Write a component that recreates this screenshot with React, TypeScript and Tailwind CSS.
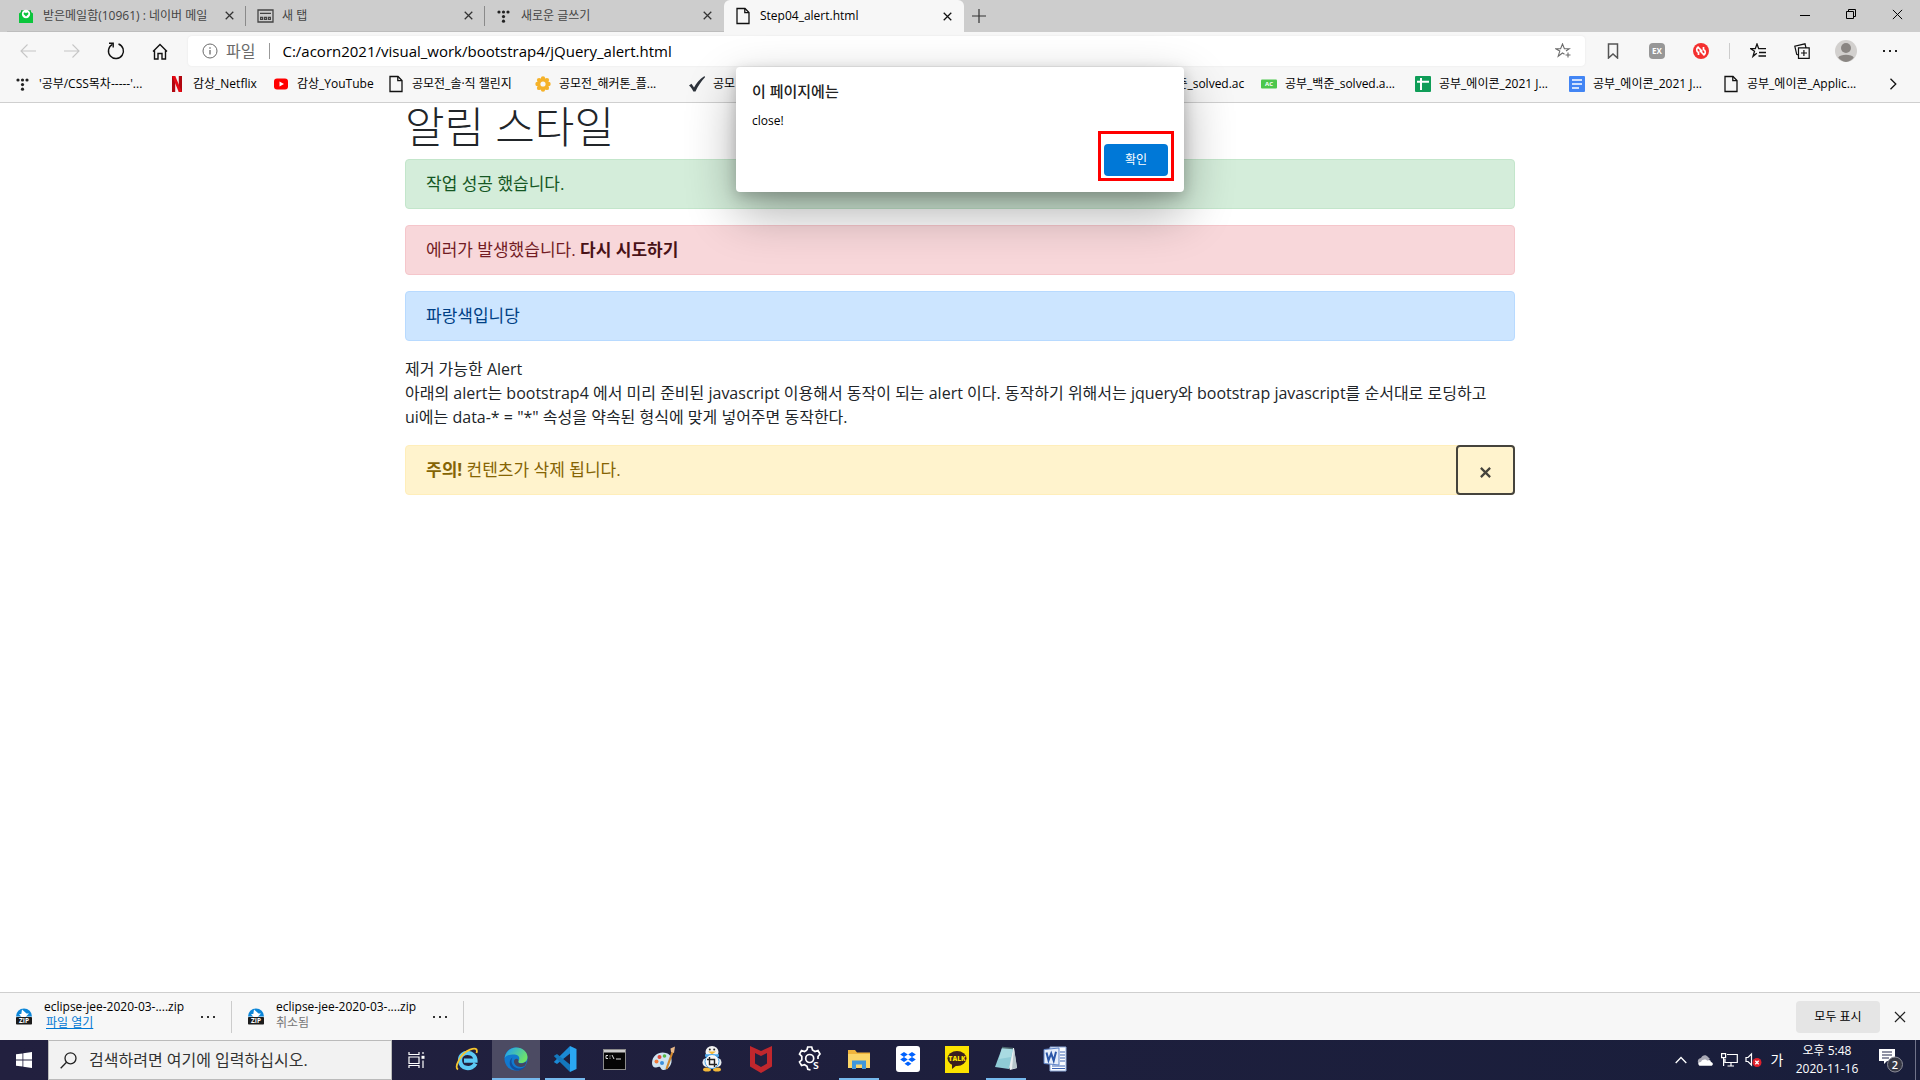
import React from "react";

/* ---------- small icons ---------- */

function CloseIcon({ size = 10, color = "#222", stroke = 1.2 }: { size?: number; color?: string; stroke?: number }) {
  return (
    <svg width={size} height={size} viewBox="0 0 10 10" fill="none" stroke={color} strokeWidth={stroke}>
      <path d="M.8.8l8.4 8.4M9.2.8L.8 9.2" />
    </svg>
  );
}

function PageIcon() {
  return (
    <svg width="16" height="18" viewBox="0 0 16 18" fill="none" stroke="#111" strokeWidth="1.3">
      <path d="M2 1.5h8l4 4v11H2z" />
      <path d="M9.8 1.5v4.2H14" />
    </svg>
  );
}

function TistoryIcon() {
  return (
    <svg width="16" height="16" viewBox="0 0 16 16" fill="#222">
      <circle cx="3" cy="4" r="1.6" />
      <circle cx="7.5" cy="4" r="1.6" />
      <circle cx="12" cy="4" r="1.6" />
      <circle cx="7.5" cy="8.6" r="1.6" />
      <circle cx="7.5" cy="13.2" r="1.6" />
    </svg>
  );
}

function MailIcon() {
  return (
    <svg width="16" height="16" viewBox="0 0 16 16">
      <path d="M1 5.500l2-1.500V2.500h10V4l2 1.500V15H1z" fill="#0bc63c" />
      <path d="M3 2.500h10v7L8 12 3 9.500z" fill="#09b637" />
      <path d="M1 5.500L8 11l7-5.500V15H1z" fill="#0bc63c" />
      <circle cx="8" cy="6" r="4.200" fill="#fff" />
      <path d="M8 8.600L5.700 6.200c-.6-1.600 1.500-2.300 2.300-.9.800-1.400 2.900-.7 2.300.9z" fill="#0bc63c" />
    </svg>
  );
}

function NewTabIcon() {
  return (
    <svg width="17" height="14" viewBox="0 0 17 14" fill="none" stroke="#444" strokeWidth="1.300">
      <path d="M1 1h15v12H1zM3 4.300h11" />
      <path d="M3.600 8.300h2v2h-2zM7.500 8.300h2v2h-2zM11.400 8.300h2v2h-2z" strokeWidth="1.200" />
    </svg>
  );
}

function NetflixIcon() {
  return (
    <svg width="16" height="16" viewBox="0 0 16 16">
      <path d="M3 0h3.200v16H3zM9.800 0H13v16H9.800z" fill="#b1060f" />
      <path d="M3 0h3.200L13 16H9.800z" fill="#e50914" />
    </svg>
  );
}

function YoutubeIcon() {
  return (
    <svg width="16" height="16" viewBox="0 0 16 16">
      <rect x="1" y="2.500" width="14" height="11" rx="3" fill="#f00" />
      <path d="M6.500 5.500v5L11 8z" fill="#fff" />
    </svg>
  );
}

function FlowerIcon() {
  return (
    <svg width="16" height="16" viewBox="0 0 16 16">
      <g fill="#f5b22a">
        <circle cx="8" cy="8" r="5.500" />
        <circle cx="8" cy="2.500" r="2.200" />
        <circle cx="8" cy="13.500" r="2.200" />
        <circle cx="2.500" cy="8" r="2.200" />
        <circle cx="13.500" cy="8" r="2.200" />
        <circle cx="4.100" cy="4.100" r="2.200" />
        <circle cx="11.900" cy="4.100" r="2.200" />
        <circle cx="4.100" cy="11.900" r="2.200" />
        <circle cx="11.900" cy="11.900" r="2.200" />
      </g>
      <circle cx="8" cy="8" r="2.600" fill="#f7f7f7" />
    </svg>
  );
}

function CheckIcon() {
  return (
    <svg width="16" height="16" viewBox="0 0 16 16">
      <path d="M0 9.500l2.500-1.800L5 11.500C7.500 7 10.500 3 15.500 0l.5 1.200C12 5.500 9 10 6.500 15.500H4.300C3.300 13 2 11 0 9.500z" fill="#2d333b" />
    </svg>
  );
}

function AcIcon() {
  return (
    <svg width="16" height="16" viewBox="0 0 16 16">
      <rect y="3.500" width="16" height="9" rx="1" fill="#4cc74c" />
      <text x="8" y="10.200" textAnchor="middle" fontSize="6" fontWeight="700" fill="#fff" fontFamily="Open Sans">AC</text>
    </svg>
  );
}

function SheetIcon() {
  return (
    <svg width="16" height="16" viewBox="0 0 16 16">
      <rect width="16" height="16" rx="1" fill="#0f9d58" />
      <path d="M6 2v12M2 5.700h12" stroke="#fff" strokeWidth="2" />
    </svg>
  );
}

function DocIcon() {
  return (
    <svg width="16" height="16" viewBox="0 0 16 16">
      <rect width="16" height="16" rx="1" fill="#4285f4" />
      <path d="M3 4h10M3 8h10M3 12h7" stroke="#fff" strokeWidth="1.700" />
    </svg>
  );
}

/* ---------- tab strip ---------- */

function Tab({ icon, title, active = false, divider = false }: { icon: React.ReactNode; title: string; active?: boolean; divider?: boolean }) {
  return (
    <div
      className={
        active
          ? "flex h-full w-60 items-center rounded-t-md bg-[#f7f7f7] pr-3 pl-2.5 text-black"
          : "relative flex h-full w-[239px] items-center border-b border-[#bdbdbd] pr-3 pl-2.5 text-[#444]"
      }
    >
      {divider && <span className="absolute top-1.5 right-0 h-5 w-px bg-[#8a8a8a]" />}
      <span className="flex w-[18px] shrink-0 justify-center">{icon}</span>
      <button className="ml-2 min-w-0 flex-1 overflow-hidden text-left text-xs whitespace-nowrap">{title}</button>
      <button aria-label="탭 닫기" className="shrink-0">
        <CloseIcon size={9} color={active ? "#111" : "#333"} stroke={1.4} />
      </button>
    </div>
  );
}

function TabStrip() {
  return (
    <div className="flex h-8 items-center justify-between bg-[#cdcdcd]">
      <div className="flex h-full items-center pl-[7px]">
        <Tab icon={<MailIcon />} title="받은메일함(10961) : 네이버 메일" divider />
        <Tab icon={<NewTabIcon />} title="새 탭" divider />
        <Tab icon={<TistoryIcon />} title="새로운 글쓰기" />
        <Tab icon={<PageIcon />} title="Step04_alert.html" active />
        <button aria-label="새 탭" className="ml-2">
          <svg width="14" height="14" viewBox="0 0 14 14" stroke="#333" strokeWidth="1.200">
            <path d="M7 0v14M0 7h14" />
          </svg>
        </button>
      </div>
      <div className="flex h-full items-center">
        <button aria-label="최소화" className="flex h-full w-[46px] items-center justify-center">
          <svg width="10" height="10" viewBox="0 0 10 10" stroke="#000"><path d="M0 4.500h10" /></svg>
        </button>
        <button aria-label="이전 크기로" className="flex h-full w-[46px] items-center justify-center pb-1">
          <svg width="10" height="10" viewBox="0 0 10 10" fill="none" stroke="#000"><path d="M.5 2.500h7v7h-7zM2.500 2.500v-2h7v7h-2" /></svg>
        </button>
        <button aria-label="닫기" className="flex h-full w-[46px] items-center justify-center pb-1">
          <CloseIcon size={11} color="#000" stroke={0.9} />
        </button>
      </div>
    </div>
  );
}

/* ---------- toolbar ---------- */

function ToolButton({ label, children }: { label: string; children: React.ReactNode }) {
  return (
    <button aria-label={label} className="flex h-8 w-11 shrink-0 items-center justify-center">
      {children}
    </button>
  );
}

function Toolbar() {
  return (
    <div className="flex h-[38px] items-center bg-[#f7f7f7] pl-1.5">
      <ToolButton label="뒤로">
        <svg width="16" height="14" viewBox="0 0 16 14" fill="none" stroke="#c6c6c6" strokeWidth="1.100"><path d="M16 7H1M7.500.5L1 7l6.500 6.500" /></svg>
      </ToolButton>
      <ToolButton label="앞으로">
        <svg width="16" height="14" viewBox="0 0 16 14" fill="none" stroke="#c6c6c6" strokeWidth="1.100"><path d="M0 7h15M8.500.5L15 7l-6.500 6.500" /></svg>
      </ToolButton>
      <ToolButton label="새로 고침">
        <svg width="18" height="18" viewBox="0 0 18 18" fill="none" stroke="#111" strokeWidth="1.400">
          <path d="M11.500 2A7.500 7.500 0 1 1 5.500 2.400" />
          <path d="M2 1.200h4.200v4.200" />
        </svg>
      </ToolButton>
      <ToolButton label="홈">
        <svg width="16" height="17" viewBox="0 0 16 17" fill="none" stroke="#111" strokeWidth="1.400">
          <path d="M1 8.500L8 1.500l7 7M2.500 7.500V16H6v-5.500h4V16h3.500V7.500" />
        </svg>
      </ToolButton>
      <div className="ml-1.5 flex h-[30px] flex-1 items-center rounded bg-white px-3.5 shadow-[0_0_2px_#e4e4e4]">
        <svg className="shrink-0" width="16" height="16" viewBox="0 0 16 16" fill="none" stroke="#6b6b6b">
          <circle cx="8" cy="8" r="7" />
          <path d="M8 7v4.500M8 4.300v1.400" strokeWidth="1.300" />
        </svg>
        <span className="ml-2 shrink-0 text-base text-[#6b6b6b]">파일</span>
        <span className="ml-3.5 h-4 w-px shrink-0 bg-[#999]" />
        <input
          aria-label="주소"
          readOnly
          value="C:/acorn2021/visual_work/bootstrap4/jQuery_alert.html"
          className="ml-3 min-w-0 flex-1 bg-transparent text-[15px] text-black outline-none"
        />
        <button aria-label="즐겨찾기에 추가" className="shrink-0">
          <svg width="16" height="16" viewBox="0 0 16 16" fill="none" stroke="#6b6b6b" strokeWidth="1.100">
            <path d="M9.500 11.200L7.500 10l-4.300 3.200 1.600-5.100L.8 5.800h4.800L7.500 1l1.900 4.800h4.800L11 8M13 9.500v5M10.500 12h5" />
          </svg>
        </button>
      </div>
      <div className="ml-1.5 flex items-center">
        <ToolButton label="책갈피">
          <svg width="12" height="16" viewBox="0 0 12 16" fill="none" stroke="#555" strokeWidth="1.500"><path d="M1.500 1h9v14L6 11l-4.500 4z" /></svg>
        </ToolButton>
        <ToolButton label="확장 EX">
          <span className="flex size-4 items-center justify-center rounded-sm bg-[#979797] text-[8px] font-bold text-white">EX</span>
        </ToolButton>
        <ToolButton label="확장 차단기">
          <svg width="16" height="16" viewBox="0 0 16 16" fill="none">
            <circle cx="8" cy="8" r="8" fill="#f4302f" />
            <path d="M5.500 12V9.500C3.200 8.500 3.200 5.500 5 4.200l4.300 4.300M10.500 4v2.500c2.300 1 2.300 4 .5 5.300L6.700 7.500" stroke="#fff" strokeWidth="1.700" />
          </svg>
        </ToolButton>
        <span className="mx-1.5 h-4 w-px bg-[#ccc]" />
        <ToolButton label="즐겨찾기">
          <svg width="17" height="16" viewBox="0 0 17 16" fill="none" stroke="#111" strokeWidth="1.300">
            <path d="M6.800 10.200L3 13.300l1.500-5L.8 5.700h4.500L7 1l1.700 4.700H16M9 9.500h7M8.500 13h7.500" />
          </svg>
        </ToolButton>
        <ToolButton label="컬렉션">
          <svg width="16" height="16" viewBox="0 0 16 16" fill="none" stroke="#111" strokeWidth="1.200">
            <path d="M4.500 4.800h10.700v10.500H4.500zM9.900 7v6M7 10h6M4.300 12L2.700 11.400.8 3.200 11 .8l.9 3.700" />
          </svg>
        </ToolButton>
        <ToolButton label="프로필">
          <svg width="22" height="22" viewBox="0 0 22 22">
            <circle cx="11" cy="11" r="11" fill="#d2d0ce" />
            <circle cx="11" cy="8" r="5" fill="#8a8683" />
            <path d="M3.200 17.500c2-3.700 13.600-3.700 15.600 0A11 11 0 0 1 11 22a11 11 0 0 1-7.800-4.500z" fill="#8a8683" />
          </svg>
        </ToolButton>
        <ToolButton label="설정 및 기타">
          <svg width="16" height="4" viewBox="0 0 16 4" fill="#222"><path d="M1 1h2v2H1zM7 1h2v2H7zM13 1h2v2h-2z" /></svg>
        </ToolButton>
        <span className="w-2" />
      </div>
    </div>
  );
}

/* ---------- bookmarks ---------- */

type Bookmark = { icon: React.ReactNode; label: string; w: string };

const firstBookmarks: Bookmark[] = [
  { icon: <TistoryIcon />, label: "'공부/CSS목차-----'...", w: "w-[154px]" },
  { icon: <NetflixIcon />, label: "감상_Netflix", w: "w-[104px]" },
  { icon: <YoutubeIcon />, label: "감상_YouTube", w: "w-[115px]" },
  { icon: <PageIcon />, label: "공모전_솔·직 챌린지", w: "w-[147px]" },
  { icon: <FlowerIcon />, label: "공모전_해커톤_플...", w: "w-[154px]" },
  { icon: <CheckIcon />, label: "공모", w: "w-[48px]" },
];

const lastBookmarks: Bookmark[] = [
  { icon: <AcIcon />, label: "공부_백준_solved.ac", w: "w-[147px]" },
  { icon: <AcIcon />, label: "공부_백준_solved.a...", w: "w-[154px]" },
  { icon: <SheetIcon />, label: "공부_에이콘_2021 J...", w: "w-[154px]" },
  { icon: <DocIcon />, label: "공부_에이콘_2021 J...", w: "w-[154px]" },
  { icon: <PageIcon />, label: "공부_에이콘_Applic...", w: "w-[163px]" },
];

function BookmarkList({ items }: { items: Bookmark[] }) {
  return (
    <ul className="flex items-center">
      {items.map((b, i) => (
        <li key={i} className={b.w}>
          <a href="#" className="flex items-center gap-2 text-xs whitespace-nowrap text-black">
            <span className="shrink-0">{b.icon}</span>
            {b.label}
          </a>
        </li>
      ))}
    </ul>
  );
}

function BookmarkBar() {
  return (
    <nav className="flex h-[33px] items-center border-b border-[#cfcfcf] bg-[#f7f7f7] pr-5 pb-1 pl-[15px]">
      <BookmarkList items={firstBookmarks} />
      <div className="ml-auto">
        <BookmarkList items={lastBookmarks} />
      </div>
      <button aria-label="더 보기">
        <svg width="14" height="12" viewBox="0 0 14 12" fill="none" stroke="#111" strokeWidth="1.300"><path d="M4.500.7L9.800 6l-5.300 5.300" /></svg>
      </button>
    </nav>
  );
}

/* ---------- page ---------- */

function Alert({ tone, children }: { tone: string; children: React.ReactNode }) {
  return <div role="alert" className={"mb-4 rounded border px-5 py-3 text-[17px] leading-6 " + tone}>{children}</div>;
}

function Page() {
  return (
    <main className="flex-1 bg-white">
      <div className="mx-auto w-full max-w-[1110px] text-[17px] leading-6 text-[#212529]">
        <h1 className="mb-2 text-[43px] leading-[48px] font-light">알림 스타일</h1>
        <Alert tone="border-[#c3e6cb] bg-[#d4edda] text-[#155724]">작업 성공 했습니다.</Alert>
        <Alert tone="border-[#f5c6cb] bg-[#f8d7da] text-[#721c24]">
          에러가 발생했습니다. <a href="#" className="font-bold text-[#491217]">다시 시도하기</a>
        </Alert>
        <Alert tone="border-[#b8daff] bg-[#cce5ff] text-[#004085]">파랑색입니당</Alert>
        <p className="mb-4 text-base leading-6">
          제거 가능한 Alert
          <br />
          아래의 alert는 bootstrap4 에서 미리 준비된 javascript 이용해서 동작이 되는 alert 이다. 동작하기 위해서는 jquery와 bootstrap javascript를 순서대로 로딩하고
          <br />
          ui에는 data-* = "*" 속성을 약속된 형식에 맞게 넣어주면 동작한다.
        </p>
        <div role="alert" className="flex items-stretch justify-between rounded border border-[#ffeeba] bg-[#fff3cd] pl-5 text-[#856404]">
          <span className="py-3">
            <strong>주의!</strong> 컨텐츠가 삭제 됩니다.
          </span>
          <button aria-label="Close" className="-m-px flex w-[59px] items-center justify-center rounded border-2 border-[#45433c] pt-1">
            <CloseIcon size={11} color="#45433c" stroke={2} />
          </button>
        </div>
      </div>
    </main>
  );
}

function Dialog() {
  return (
    <div
      role="dialog"
      aria-labelledby="dialog-title"
      className="absolute top-[67px] left-1/2 flex h-[125px] w-[448px] -translate-x-1/2 flex-col rounded bg-white pt-3 pr-2.5 pb-[11px] pl-4 shadow-[0_20px_50px_rgba(0,0,0,0.32),0_4px_14px_rgba(0,0,0,0.2)]"
    >
      <h2 id="dialog-title" className="text-[15px] leading-6 font-medium text-[#222]">이 페이지에는</h2>
      <p className="mt-2 text-xs leading-5 text-black">close!</p>
      <div className="mt-auto self-end border-[3px] border-[#f00] px-[3px] pt-2.5 pb-0.5">
        <button className="flex h-8 w-16 items-center justify-center rounded-sm bg-[#0078d7] text-xs text-white">확인</button>
      </div>
    </div>
  );
}

/* ---------- downloads ---------- */

function ZipIcon() {
  return (
    <svg width="16" height="17" viewBox="0 0 16 17" className="shrink-0">
      <path d="M0 8.500a8 8 0 0 1 16 0z" fill="#0d86d8" />
      <path d="M6 1.500l4.500 4H13L9.500 9H5.500L3 6h2.300z" fill="#fff" />
      <rect y="9" width="16" height="7.500" rx=".8" fill="#1c1c1c" />
      <text x="8" y="15.200" textAnchor="middle" fontSize="6.500" fontWeight="700" fill="#fff" fontFamily="Open Sans">ZIP</text>
    </svg>
  );
}

function Download({ children }: { children: React.ReactNode }) {
  return (
    <div className="flex h-8 w-[232px] items-center justify-between border-r border-[#ccc] pr-3.5 pl-4">
      <div className="flex items-center gap-3">
        <ZipIcon />
        <div className="flex flex-col items-start pb-1 text-xs leading-4 text-black">
          <span>eclipse-jee-2020-03-....zip</span>
          {children}
        </div>
      </div>
      <button aria-label="다운로드 옵션">
        <svg width="18" height="4" viewBox="0 0 18 4" fill="#333"><path d="M2 1h2v2H2zM8 1h2v2H8zM14 1h2v2h-2z" /></svg>
      </button>
    </div>
  );
}

function DownloadBar() {
  return (
    <div className="flex h-12 items-center justify-between border-t border-[#cfcfcf] bg-[#f7f7f7] pr-3.5">
      <div className="flex">
        <Download><a href="#" className="ml-0.5 text-[#0078d4] underline">파일 열기</a></Download>
        <Download><span className="text-[#767676]">취소됨</span></Download>
      </div>
      <div className="flex items-center gap-3.5">
        <button className="h-8 w-[84px] rounded-sm bg-[#e5e5e5] text-xs text-black">모두 표시</button>
        <button aria-label="닫기"><CloseIcon size={12} color="#222" stroke={1} /></button>
      </div>
    </div>
  );
}

/* ---------- taskbar ---------- */

const apps = [
  {
    name: "Internet Explorer",
    icon: (
      <svg width="24" height="24" viewBox="0 0 24 24" fill="none">
        <path d="M20.500 16.500C17 23.500 5 22.500 5 13 5 3.500 20.500 3.500 20.500 13.700H9" stroke="#5ccaf5" strokeWidth="4.200" />
        <path d="M3 22.500C-1 20 5.500 6.500 15 2.700c5-2 8-1.200 6.500 3.300" stroke="#f6c52e" strokeWidth="1.800" />
      </svg>
    ),
  },
  {
    name: "Microsoft Edge",
    active: true,
    running: true,
    icon: (
      <svg width="24" height="26" viewBox="0 0 24 24">
        <defs>
          <linearGradient id="edgeTop" x1="0" y1="0" x2="1" y2=".5"><stop offset=".2" stopColor="#2aa8e0" /><stop offset="1" stopColor="#6ee26a" /></linearGradient>
        </defs>
        <circle cx="12" cy="12" r="11.500" fill="#1179cf" />
        <path d="M.6 11C2 4 7 .5 12 .5c7 0 11.500 5 11.500 9.500 0 4.500-3.500 6-6.500 6-3 0-3.300-1.300-2.500-2.300 2.500-3.700-1-6.200-4.500-6.200C5 7.500 1.500 9 .6 11z" fill="url(#edgeTop)" />
        <path d="M8.500 10.500c-3 5 1 11 6.500 11 3 0 5-1 6.500-2.700C18 26 8 24.500 6 18c-.9-3 .3-6 2.500-7.500z" fill="#134f9e" />
        <path d="M14.500 13.700c-1.500 3.300 4 3.800 8 .6-.3 2-1 3.500-2 4.700-5 2.500-11-.5-10.500-5 .3-2.500 4-3.500 4.500-.3z" fill="#45465f" />
      </svg>
    ),
  },
  {
    name: "Visual Studio Code",
    running: true,
    icon: (
      <svg width="24" height="26" viewBox="0 0 24 26">
        <path d="M17 0l6.500 3v20L17 26z" fill="#2aa7f2" />
        <path d="M17 0v7.500L4 18 .8 16z" fill="#1b8ad6" />
        <path d="M17 26v-7.500L4 8 .8 10z" fill="#1478bd" />
      </svg>
    ),
  },
  {
    name: "명령 프롬프트",
    icon: (
      <svg width="23" height="21" viewBox="0 0 23 21">
        <rect x=".5" y=".5" width="22" height="20" fill="#050505" stroke="#8b8b8b" />
        <path d="M1 1h21v2.500H1z" fill="#ccc" />
        <path d="M3 6.500h2M3 6.500v3h2M7 6.500v1M7 8.700v1M9 6l2 4M13 10h5" stroke="#ddd" fill="none" />
      </svg>
    ),
  },
  {
    name: "그림판",
    icon: (
      <svg width="24" height="26" viewBox="0 0 24 26">
        <path d="M1 17C1 9 9 5 15 7c6 1.500 7 9 4 13-3 4.500-8 5-9 2.500-.8-2-2-2-4-1.200C3 22.500 1 20 1 17z" fill="#cfe4f1" />
        <circle cx="5.500" cy="15.500" r="2" fill="#f07a3a" /><circle cx="8.500" cy="11" r="2" fill="#e24a3b" /><circle cx="13.500" cy="10" r="1.800" fill="#56b947" /><circle cx="11" cy="17" r="2" fill="#3c8fdc" />
        <path d="M15.500 23L21.500 6" stroke="#d0872d" strokeWidth="2.200" />
        <path d="M20 6l-.5-3.500L24 .5 23 7z" fill="#e9b989" />
      </svg>
    ),
  },
  {
    name: "캡처 도구",
    icon: (
      <svg width="22" height="26" viewBox="0 0 22 26">
        <ellipse cx="6" cy="23.500" rx="4" ry="2" fill="#f3b83a" /><ellipse cx="16" cy="23.500" rx="4" ry="2" fill="#f3b83a" />
        <rect x="1.500" y="12" width="19" height="9" rx="4.500" fill="#e8eef2" />
        <ellipse cx="11" cy="6" rx="6.500" ry="6" fill="#f2f2f2" />
        <circle cx="8.800" cy="3.500" r="1" fill="#222" /><circle cx="13.200" cy="3.500" r="1" fill="#222" />
        <path d="M7 5.500h8l-4 3z" fill="#f3b83a" />
        <path d="M4 9.500h14" stroke="#4aa4e8" strokeWidth="2.500" />
        <circle cx="11" cy="15.500" r="7" fill="#f8f8f8" stroke="#4aa4e8" />
        <path d="M8.500 11v7.500H16M6 13.500h7.500V21" fill="none" stroke="#222" strokeWidth="1.400" />
      </svg>
    ),
  },
  {
    name: "McAfee",
    icon: (
      <svg width="22" height="27" viewBox="0 0 22 27">
        <path d="M0 0l11 5L22 0v20.500L11 27 0 20.500z" fill="#c1272d" />
        <path d="M5 7l6 3 6-3v10.500L11 21l-6-3.500z" fill="#22203f" />
      </svg>
    ),
  },
  {
    name: "설정",
    icon: (
      <svg width="24" height="27" viewBox="0 0 24 27" fill="none" stroke="#fff" strokeWidth="1.700">
        <path d="M9 4l.7-3h4l.8 3 2.500 1.500 3-1 2 3.500-2 2.500v2.500M9 4L6.500 5.500l-3-1-2 3.500 2.300 2.300v3.500L1.500 16l2 3.500 3-.8L9 20.300l.8 3 2.700.5" />
        <circle cx="11.700" cy="12.500" r="4" />
        <text x="15" y="23" fontSize="12" fontWeight="600" fill="#fff" stroke="none" fontFamily="Open Sans">s</text>
      </svg>
    ),
  },
  {
    name: "파일 탐색기",
    running: true,
    icon: (
      <svg width="22" height="20" viewBox="0 0 22 20">
        <path d="M0 1h7l2 2.500h13V19H0z" fill="#f0b43c" /><path d="M0 5h22v14H0z" fill="#fbd568" />
        <path d="M4 20v-8.500h14V20h-4v-4.500H8V20z" fill="#3f97dc" />
      </svg>
    ),
  },
  {
    name: "Dropbox",
    icon: (
      <svg width="24" height="26" viewBox="0 0 24 26">
        <rect width="24" height="26" rx="3" fill="#fff" />
        <path d="M8 6l3.800 2.500L8 11 4.200 8.500zM16 6l3.800 2.500L16 11l-3.800-2.500zM8 11l3.800 2.500L8 16l-3.800-2.500zM16 11l3.800 2.500L16 16l-3.800-2.500zM12 15.500l3.500 2.300L12 20l-3.500-2.200z" fill="#0061fe" />
      </svg>
    ),
  },
  {
    name: "카카오톡",
    icon: (
      <svg width="24" height="27" viewBox="0 0 24 27">
        <rect width="24" height="27" fill="#fbe300" />
        <ellipse cx="12" cy="12.500" rx="9.500" ry="7.500" fill="#3b1e1e" /><path d="M7 18v5l5-4z" fill="#3b1e1e" />
        <text x="12" y="15" textAnchor="middle" fontSize="6.500" fontWeight="800" fill="#fbe300" fontFamily="Open Sans">TALK</text>
      </svg>
    ),
  },
  {
    name: "메모장",
    running: true,
    icon: (
      <svg width="24" height="26" viewBox="0 0 24 26">
        <path d="M8 2h12l3 20-7 2z" fill="#e9eef0" /><path d="M20 3l3 19-5 1z" fill="#b5c4c9" />
        <path d="M8 2l11 1-4 20L1 21z" fill="#8fcbd6" /><path d="M8 2l11 1-2 8-12 2z" fill="#a9dbe2" />
        <path d="M8 1.500l11 1" stroke="#4d6a70" strokeWidth="1.500" />
      </svg>
    ),
  },
  {
    name: "Word",
    icon: (
      <svg width="24" height="26" viewBox="0 0 24 26">
        <path d="M7 1h16v24H7z" fill="#fafcff" stroke="#8da8d8" />
        <path d="M17 6h5M17 9h5M17 12h5M17 15h5M9 20h13M9 22.500h13" stroke="#3c64b4" strokeWidth="1.200" />
        <path d="M1 3.500L16 2v17L1 17.500z" fill="#e7effb" stroke="#5d82c6" />
        <path d="M3.500 6.500l2 8 2.700-7 2.500 7.200 2.300-9" fill="none" stroke="#2b57a8" strokeWidth="2" />
      </svg>
    ),
  },
];

function Taskbar() {
  return (
    <footer className="flex h-10 items-stretch bg-linear-to-r from-[#22203f] to-[#191e3b] text-white">
      <button aria-label="시작" className="flex w-12 shrink-0 items-center justify-center">
        <svg width="16" height="16" viewBox="0 0 16 16" fill="#fff"><path d="M0 2.300l6.500-.9v6.200H0zM7.300 1.300L16 0v7.600H7.300zM0 8.400h6.500v6.200L0 13.700zM7.300 8.400H16V16l-8.700-1.300z" /></svg>
      </button>
      <label className="flex w-[344px] shrink-0 items-center gap-3 border border-[#bbb] bg-[#f2f2f2] pl-[11px]">
        <svg width="17" height="17" viewBox="0 0 17 17" fill="none" stroke="#222" strokeWidth="1.300"><circle cx="10.500" cy="6.300" r="5.500" /><path d="M6.500 10.300L.7 16.200" /></svg>
        <input aria-label="검색" placeholder="검색하려면 여기에 입력하십시오." className="min-w-0 flex-1 bg-transparent text-base text-black outline-none placeholder:text-[#333]" />
      </label>
      <button aria-label="작업 보기" className="flex w-12 items-center justify-center">
        <svg width="17" height="16" viewBox="0 0 17 16" fill="none" stroke="#fff" strokeWidth="1.200"><path d="M1 0v2.500h10V0M1 5h10v6.500H1zM1 16v-2.500h10V16M15 0v2M15 8.500V16" /><path d="M13.500 3.800h3v3h-3z" fill="#fff" stroke="none" /></svg>
      </button>
      <div className="ml-[3px] flex gap-px">
        {apps.map((a) => (
          <button key={a.name} aria-label={a.name} className={a.active ? "flex w-12 flex-col items-center bg-[#4c4b63]" : "flex w-12 flex-col items-center"}>
            <span className="flex h-[38px] items-center">{a.icon}</span>
            {a.running && <span className={a.active ? "h-0.5 w-full bg-[#76b9ed]" : "h-0.5 w-10 bg-[#76b9ed]"} />}
          </button>
        ))}
      </div>
      <div className="ml-auto flex items-center">
        <button aria-label="숨겨진 아이콘" className="flex w-6 justify-center">
          <svg width="12" height="8" viewBox="0 0 12 8" fill="none" stroke="#fff" strokeWidth="1.300"><path d="M.7 7L6 1.500 11.300 7" /></svg>
        </button>
        <button aria-label="OneDrive" className="flex w-6 justify-center">
          <svg width="16" height="11" viewBox="0 0 16 11"><path d="M1 7.500C0 4 3 3 4 3c1-3 5-4 7-1l2 2-9 6C2 10 1 9 1 7.500z" fill="#a9a9b5" /><path d="M3.500 10.800C.5 10.500 1 6.800 4 7c1-3 5-3 6-1.500C13 4 14 6 13.800 7c2.700.3 2.700 3.500 0 3.800z" fill="#fff" /></svg>
        </button>
        <button aria-label="네트워크" className="flex w-6 justify-center">
          <svg width="17" height="14" viewBox="0 0 17 14" fill="none" stroke="#fff" strokeWidth="1.200"><path d="M6 1.500h10.300v8H4V6M.6.600h4v4h-4zM2.600 4.600V13M10 9.500V13M6.500 13H13" /></svg>
        </button>
        <button aria-label="볼륨" className="flex w-6 justify-center">
          <svg width="17" height="16" viewBox="0 0 17 16" fill="none"><path d="M1 5.500h2L6.500 2v11L3 9.500H1z" stroke="#fff" strokeWidth="1.200" /><circle cx="12" cy="10.500" r="4.500" fill="#e0202c" /><path d="M10.300 8.800l3.400 3.400M13.700 8.800l-3.400 3.400" stroke="#fff" strokeWidth="1.300" /></svg>
        </button>
        <button className="w-6 text-center text-sm">가</button>
        <div className="w-[76px] text-center text-xs leading-[18px]">
          <div>오후 5:48</div>
          <div>2020-11-16</div>
        </div>
        <button aria-label="알림 2개" className="ml-2.5 flex w-8 justify-center">
          <svg width="26" height="26" viewBox="0 0 26 26">
            <path d="M1 2h16v12H9l-3 3v-3H1z" fill="#fff" /><path d="M4 5h10M4 8h10M4 11h7" stroke="#22264a" strokeWidth="1.200" />
            <circle cx="17" cy="17.500" r="7.500" fill="#363844" stroke="#8c8d99" />
            <text x="17" y="21.500" textAnchor="middle" fontSize="11" fontWeight="600" fill="#fff" fontFamily="Open Sans">2</text>
          </svg>
        </button>
        <span className="mr-1 ml-2 h-10 w-px bg-[#70738a]" />
      </div>
    </footer>
  );
}

export default function App() {
  return (
    <div className="relative flex min-h-screen flex-col bg-white font-['Open_Sans','Noto_Sans_CJK_KR',sans-serif]">
      <TabStrip />
      <Toolbar />
      <BookmarkBar />
      <Page />
      <DownloadBar />
      <Taskbar />
      <Dialog />
    </div>
  );
}
